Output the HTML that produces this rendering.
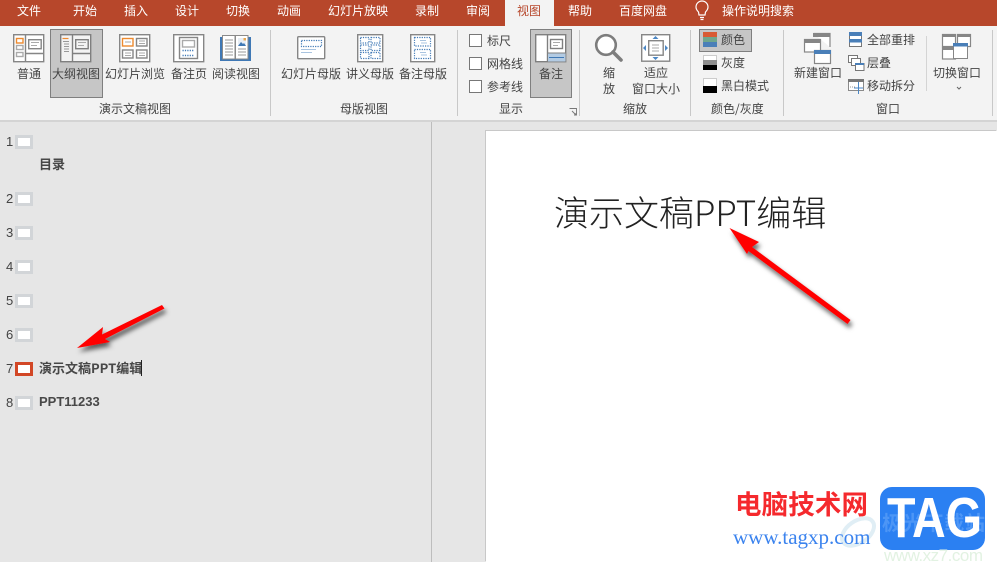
<!DOCTYPE html>
<html lang="zh"><head><meta charset="utf-8"><style>
html,body{margin:0;padding:0}
body{width:997px;height:562px;overflow:hidden;position:relative;background:#e6e6e6;font-family:"Liberation Sans","Noto Sans CJK SC",sans-serif}
div.t{position:absolute;white-space:nowrap;line-height:16px;font-size:12px;color:#444;font-family:"Noto Sans CJK SC",sans-serif}
.tab{color:#fff!important;top:3px}
.b{font-weight:700;font-size:13px!important;color:#484848!important}
.n{font-size:13px!important;color:#444!important;font-family:"Liberation Sans",sans-serif!important}
.abs{position:absolute}
</style></head><body>
<div class="abs" style="left:0;top:0;width:997px;height:26px;background:#b7472b"></div>
<div class="abs" style="left:505px;top:0;width:49px;height:27px;background:#f3f3f3"></div>
<div class="abs" style="left:0;top:26px;width:997px;height:94px;background:#f3f3f3"></div>
<div class="abs" style="left:0;top:120px;width:997px;height:2px;background:#d4d4d4"></div>
<div class="abs" style="left:431px;top:122px;width:1px;height:440px;background:#bdbdbd"></div>
<div class="abs" style="left:486px;top:131px;width:511px;height:431px;background:#fff;box-shadow:-1px -1px 0 #c8c8c8"></div>

<div class="t tab" style="left:17px">文件</div>
<div class="t tab" style="left:73px">开始</div>
<div class="t tab" style="left:124px">插入</div>
<div class="t tab" style="left:175px">设计</div>
<div class="t tab" style="left:226px">切换</div>
<div class="t tab" style="left:277px">动画</div>
<div class="t tab" style="left:328px">幻灯片放映</div>
<div class="t tab" style="left:415px">录制</div>
<div class="t tab" style="left:466px">审阅</div>
<div class="t" style="left:517px;top:3px;color:#b7472b">视图</div>
<div class="t tab" style="left:568px">帮助</div>
<div class="t tab" style="left:619px">百度网盘</div>
<div class="t tab" style="left:722px">操作说明搜索</div>

<div class="abs" style="left:50px;top:29px;width:51px;height:67px;background:#c6c6c6;border:1px solid #7f7f7f"></div>
<div class="abs" style="left:530px;top:29px;width:40px;height:67px;background:#c6c6c6;border:1px solid #7f7f7f"></div>
<div class="abs" style="left:699px;top:29px;width:51px;height:21px;background:#c6c6c6;border:1px solid #7f7f7f"></div>

<svg class="abs" style="left:0;top:0" width="997" height="122" viewBox="0 0 997 122" fill="none">
<!-- lightbulb -->
<path d="M698.500 12c-1.500-1.500-2.500-3-2.500-5a6 6 0 0 1 12 0c0 2-1 3.500-2.500 5l-.5 3h-6zM700 17.500h4M700.500 19.500h3" stroke="#fff" stroke-width="1.200"/>
<g stroke="#c8c8c8" stroke-width="1">
<path d="M270.500 30v86M457.500 30v86M579.500 30v86M690.500 30v86M783.500 30v86M992.500 30v86"/>
<path d="M926.500 36v55" stroke="#d4d4d4"/>
</g>
<!-- 普通 -->
<g stroke="#868686" stroke-width="1.400"><rect x="13.700" y="34.700" width="30" height="27" fill="#fff"/><path d="M25.500 34.700v27M25.500 53.500h18"/><rect x="28.700" y="39.700" width="12.500" height="9"/><path d="M31 42.500h8M31 45.500h6" stroke="#aaa" stroke-width="1"/>
<rect x="16.500" y="38.500" width="6.500" height="4.500" stroke="#ed8a2f"/><rect x="16.500" y="45.500" width="6.500" height="4" stroke="#aaa"/><rect x="16.500" y="52.500" width="6.500" height="4" stroke="#aaa"/></g>
<!-- 大纲 -->
<g stroke="#7f7f7f" stroke-width="1.400"><rect x="60.700" y="34.700" width="30" height="27" fill="#f3f3f3"/><path d="M72.500 34.700v27M72.500 53.500h18"/><rect x="75.700" y="39.700" width="12.500" height="9"/><path d="M78 42.500h8M78 45.500h6" stroke="#aaa" stroke-width="1"/>
<path d="M62.500 38.500h6" stroke="#ed8a2f" stroke-width="1.200"/><path d="M63 41.500h6M64 44h5M64 46.500h5M64 49h5M64 51.500h5" stroke="#999" stroke-width="1"/></g>
<!-- 浏览 -->
<g stroke="#868686" stroke-width="1.400"><rect x="119.700" y="34.700" width="30" height="27" fill="#fff"/><rect x="122.500" y="38.500" width="10.500" height="7.500" stroke="#ed8a2f"/><rect x="136.500" y="38.500" width="10.500" height="7.500"/><rect x="122.500" y="50" width="10.500" height="8"/><rect x="136.500" y="50" width="10.500" height="8"/>
<path d="M125 42h6M139 41h6M139 43.500h6M125 53h6M125 55.500h6M139 53h6M139 55.500h6" stroke="#aaa" stroke-width="1"/></g>
<!-- 备注页 -->
<g stroke="#868686" stroke-width="1.400"><rect x="173.700" y="34.700" width="30" height="27" fill="#fff"/><rect x="179.500" y="37.500" width="18" height="21"/><rect x="182.500" y="40.500" width="12" height="6.500" stroke="#aaa"/><path d="M182.500 50.500h12M182.500 55.500h12" stroke="#3f78b5" stroke-dasharray="1.200 1.200"/></g>
<!-- 阅读 -->
<rect x="220" y="37" width="31" height="24" fill="#3f78b5"/>
<path d="M222.500 35.500h12.500v23.500h-12.500zM235.500 35.500h12.500v23.500h-12.500z" fill="#fff" stroke="#8a8a8a"/>
<path d="M225 40h8M225 43h8M225 46h8M225 49h8M225 52h8M225 55h8M238 49h8M238 52h8M238 55h8" stroke="#999"/>
<rect x="238" y="38" width="8" height="8" fill="#e8eef5"/><path d="M238 46l3-4 2 2 1-1 2 3z" fill="#3f78b5"/><rect x="243.500" y="38" width="2.500" height="2.500" fill="#e8a851"/>
<!-- 幻灯片母版 -->
<rect x="297.700" y="36.700" width="27" height="22" rx="1" fill="#fff" stroke="#868686" stroke-width="1.400"/>
<rect x="301.500" y="40.500" width="20" height="6" stroke="#3f78b5" stroke-width="1.200" stroke-dasharray="1.200 1.200"/><path d="M301 49.500h15M301 52.500h11" stroke="#a9c4e0"/>
<!-- 讲义母版 -->
<rect x="357.700" y="34.700" width="25" height="27" fill="#fff" stroke="#868686" stroke-width="1.400"/>
<g stroke="#3f78b5" stroke-width="1.200" stroke-dasharray="1.200 1.200"><rect x="360.500" y="37.500" width="8.500" height="5.500"/><rect x="371" y="37.500" width="9" height="5.500"/><rect x="360.500" y="45" width="8.500" height="5.500"/><rect x="371" y="45" width="9" height="5.500"/><rect x="360.500" y="52.500" width="8.500" height="6"/><rect x="371" y="52.500" width="9" height="6"/></g>
<!-- 备注母版 -->
<rect x="410.700" y="34.700" width="24" height="27" fill="#fff" stroke="#868686" stroke-width="1.400"/>
<g stroke="#3f78b5" stroke-width="1.200" stroke-dasharray="1.200 1.200"><rect x="414.500" y="37.500" width="16" height="8.500"/><rect x="414.500" y="49.500" width="16" height="9"/></g>
<path d="M420 40.500h6M421 43h6M420 52.500h6M421 55h6" stroke="#a9c4e0"/>
<!-- 复选框 -->
<g fill="#fff" stroke="#777"><rect x="469.500" y="34.500" width="12" height="12"/><rect x="469.500" y="57.500" width="12" height="12"/><rect x="469.500" y="80.500" width="12" height="12"/></g>
<!-- 备注 -->
<g stroke="#7f7f7f" stroke-width="1.400"><rect x="535.700" y="34.700" width="30" height="27" fill="#fff"/><path d="M547.500 34.700v27"/><rect x="548" y="53" width="17.500" height="8.500" fill="#b3cbe3" stroke="none"/><path d="M549 57.500h15" stroke="#3f78b5" stroke-width="1"/><path d="M547.500 53h18" stroke-width="1"/><rect x="550.500" y="39.500" width="12" height="9"/><path d="M553 42.500h7M553 45.500h5" stroke="#aaa" stroke-width="1"/></g>
<!-- 缩放 -->
<circle cx="606" cy="45" r="9.800" fill="#fff" stroke="#7d7d7d" stroke-width="2.600"/><path d="M613 52l8 8" stroke="#7d7d7d" stroke-width="3.600" stroke-linecap="round"/>
<!-- 适应 -->
<rect x="641.700" y="34.700" width="28" height="26.500" fill="#fff" stroke="#868686" stroke-width="1.400"/><rect x="648.700" y="40.700" width="14.500" height="14.500" stroke="#868686" stroke-width="1.400"/><path d="M652 45h7M652 48h7M652 51h7" stroke="#aaa"/>
<path d="M655.500 36l3 3h-6zM655.500 60l3-3h-6zM643 48l3-3v6zM668 48l-3-3v6z" fill="#4a86c4"/>
<!-- 颜色 -->
<rect x="703" y="32" width="14" height="5" fill="#d85a33"/><rect x="703" y="37" width="14" height="5" fill="#6fa68c"/><rect x="703" y="42" width="14" height="5" fill="#4a7fb8"/>
<rect x="703.500" y="55.500" width="13" height="5" fill="#fff" stroke="#ccc"/><rect x="703" y="60" width="14" height="5" fill="#8f8f8f"/><rect x="703" y="65" width="14" height="5" fill="#000"/>
<rect x="703.500" y="78.500" width="13" height="8" fill="#fff" stroke="#ccc"/><rect x="703" y="86" width="14" height="7" fill="#000"/>
<!-- 新建窗口 -->
<g stroke="#868686" stroke-width="1.200"><path d="M813.500 33.500h16.500v13.500" fill="#fff"/><rect x="813" y="33" width="17" height="4" fill="#868686" stroke="none"/><rect x="804.500" y="39.500" width="16" height="12.500" fill="#fff"/><rect x="804" y="39" width="17" height="4" fill="#868686" stroke="none"/>
<rect x="814.500" y="50.500" width="16" height="13" fill="#fff"/><rect x="814" y="50" width="17" height="4" fill="#4a7fb8" stroke="none"/></g>
<!-- 全部重排 -->
<g stroke="#777" stroke-width="1"><rect x="849.500" y="32.500" width="12" height="14" fill="#fff"/></g><rect x="849" y="32" width="13" height="4" fill="#4a7fb8"/><rect x="849" y="39" width="13" height="3.500" fill="#4a7fb8"/>
<!-- 层叠 -->
<g stroke="#777"><rect x="848.500" y="55.500" width="9" height="7" fill="#fff"/><rect x="851.500" y="58.500" width="9" height="7" fill="#fff"/><rect x="855.500" y="63.500" width="8.500" height="7" fill="#fff"/></g><rect x="855" y="63" width="9" height="2" fill="#4a7fb8"/>
<!-- 移动拆分 -->
<rect x="848.500" y="79.500" width="15" height="11" fill="#fff" stroke="#8a8a8a"/><rect x="848" y="79" width="16" height="3" fill="#777"/><path d="M850 87h5" stroke="#999" stroke-dasharray="1 1"/><path d="M858.500 82v12M854 88h9" stroke="#4a86c4"/>
<!-- 切换窗口 -->
<g stroke="#868686" stroke-width="1.200"><rect x="942.500" y="34.500" width="13" height="12" fill="#fff"/><rect x="957.500" y="34.500" width="13" height="12" fill="#fff"/><rect x="942.500" y="47.500" width="13" height="11.500" fill="#fff"/></g>
<rect x="942" y="34" width="14" height="3" fill="#868686"/><rect x="957" y="34" width="14" height="3" fill="#868686"/><rect x="942" y="47" width="14" height="3" fill="#868686"/>
<rect x="953.500" y="43.500" width="14" height="15" fill="#fff" stroke="#868686"/><rect x="953" y="43" width="15" height="3.500" fill="#4a7fb8"/>
<path d="M957 87l2 2 2-2" stroke="#666"/>
<path d="M569.500 108.500h7v7M572 111l4 4M574 115h2v-2" stroke="#777" stroke-width=".9"/>
</svg>

<div class="t" style="left:17px;top:66px">普通</div>
<div class="t" style="left:52px;top:66px">大纲视图</div>
<div class="t" style="left:105px;top:66px">幻灯片浏览</div>
<div class="t" style="left:171px;top:66px">备注页</div>
<div class="t" style="left:212px;top:66px">阅读视图</div>
<div class="t" style="left:99px;top:101px">演示文稿视图</div>
<div class="t" style="left:281px;top:66px">幻灯片母版</div>
<div class="t" style="left:346px;top:66px">讲义母版</div>
<div class="t" style="left:399px;top:66px">备注母版</div>
<div class="t" style="left:340px;top:101px">母版视图</div>
<div class="t" style="left:487px;top:33px">标尺</div>
<div class="t" style="left:487px;top:56px">网格线</div>
<div class="t" style="left:487px;top:79px">参考线</div>
<div class="t" style="left:539px;top:66px">备注</div>
<div class="t" style="left:499px;top:101px">显示</div>
<div class="t" style="left:603px;top:65px">缩</div>
<div class="t" style="left:603px;top:81px">放</div>
<div class="t" style="left:644px;top:65px">适应</div>
<div class="t" style="left:632px;top:81px">窗口大小</div>
<div class="t" style="left:623px;top:101px">缩放</div>
<div class="t" style="left:721px;top:32px">颜色</div>
<div class="t" style="left:721px;top:55px">灰度</div>
<div class="t" style="left:721px;top:78px">黑白模式</div>
<div class="t" style="left:711px;top:101px">颜色/灰度</div>
<div class="t" style="left:794px;top:65px">新建窗口</div>
<div class="t" style="left:867px;top:32px">全部重排</div>
<div class="t" style="left:867px;top:55px">层叠</div>
<div class="t" style="left:867px;top:78px">移动拆分</div>
<div class="t" style="left:876px;top:101px">窗口</div>
<div class="t" style="left:933px;top:65px">切换窗口</div>

<!-- 大纲 -->
<svg class="abs" style="left:0;top:122px" width="40" height="300" viewBox="0 122 40 300">
<g fill="#fff" stroke="#d2d5d8" stroke-width="3"><rect x="16.500" y="136.500" width="15" height="11"/><rect x="16.500" y="193.500" width="15" height="11"/><rect x="16.500" y="227.500" width="15" height="11"/><rect x="16.500" y="261.500" width="15" height="11"/><rect x="16.500" y="295.500" width="15" height="11"/><rect x="16.500" y="329.500" width="15" height="11"/><rect x="16.500" y="363.500" width="15" height="11" stroke="#d24726"/><rect x="16.500" y="397.500" width="15" height="11"/></g></svg>
<div class="t n" style="left:6px;top:134px">1</div>
<div class="t n" style="left:6px;top:191px">2</div>
<div class="t n" style="left:6px;top:225px">3</div>
<div class="t n" style="left:6px;top:259px">4</div>
<div class="t n" style="left:6px;top:293px">5</div>
<div class="t n" style="left:6px;top:327px">6</div>
<div class="t n" style="left:6px;top:361px">7</div>
<div class="t n" style="left:6px;top:395px">8</div>
<div class="t b" style="left:39px;top:156px">目录</div>
<div class="t b" style="left:39px;top:360px">演示文稿PPT编辑</div>
<div class="abs" style="left:141px;top:360px;width:1px;height:16px;background:#222"></div>
<div class="t b" style="left:39px;top:394px;font-family:'Liberation Sans',sans-serif">PPT11233</div>

<div class="t" style="left:554px;top:187px;font-size:35px;line-height:50px;font-weight:300;color:#222">演示文稿PPT编辑</div>

<!-- 箭头 + 水印 -->
<svg class="abs" style="left:0;top:0" width="997" height="562" viewBox="0 0 997 562">
<defs><filter id="s" x="-30%" y="-30%" width="170%" height="170%"><feDropShadow dx="2" dy="4" stdDeviation="2.500" flood-color="#000" flood-opacity=".6"/></filter></defs>
<g fill="#f00" filter="url(#s)">
<path d="M77 348L103 327 102 334.500 162 305 164.500 308.500 105 339 110 342z"/>
<path d="M729.500 228L759 242 752 247 850.500 320 847.500 324 748.500 251 747 254z"/>
</g>
<ellipse cx="858" cy="532" rx="18" ry="11" transform="rotate(-35 858 532)" fill="none" stroke="#e0eef5" stroke-width="4"/>
<text x="735" y="514" font-family="Noto Sans CJK SC,sans-serif" font-size="26.500" font-weight="700" fill="#f5292d" textLength="133">电脑技术网</text>
<text x="733" y="544" font-family="Liberation Serif,serif" font-size="21" fill="#3b83ee">www.tagxp.com</text>
<rect x="880" y="487" width="105" height="63" rx="12" fill="#2b80f2"/>
<text x="882" y="530" font-family="Noto Sans CJK SC,sans-serif" font-size="20" font-weight="700" fill="#4d96f6" textLength="103">极光下载站</text>
<text x="887" y="537" font-family="Liberation Sans,sans-serif" font-size="57" fill="#fff" font-weight="700" textLength="95" lengthAdjust="spacingAndGlyphs">TAG</text>
<text x="884" y="561" font-family="Liberation Sans,sans-serif" font-size="17" fill="#e2f2e2" textLength="99">www.xz7.com</text>
</svg>
</body></html>
